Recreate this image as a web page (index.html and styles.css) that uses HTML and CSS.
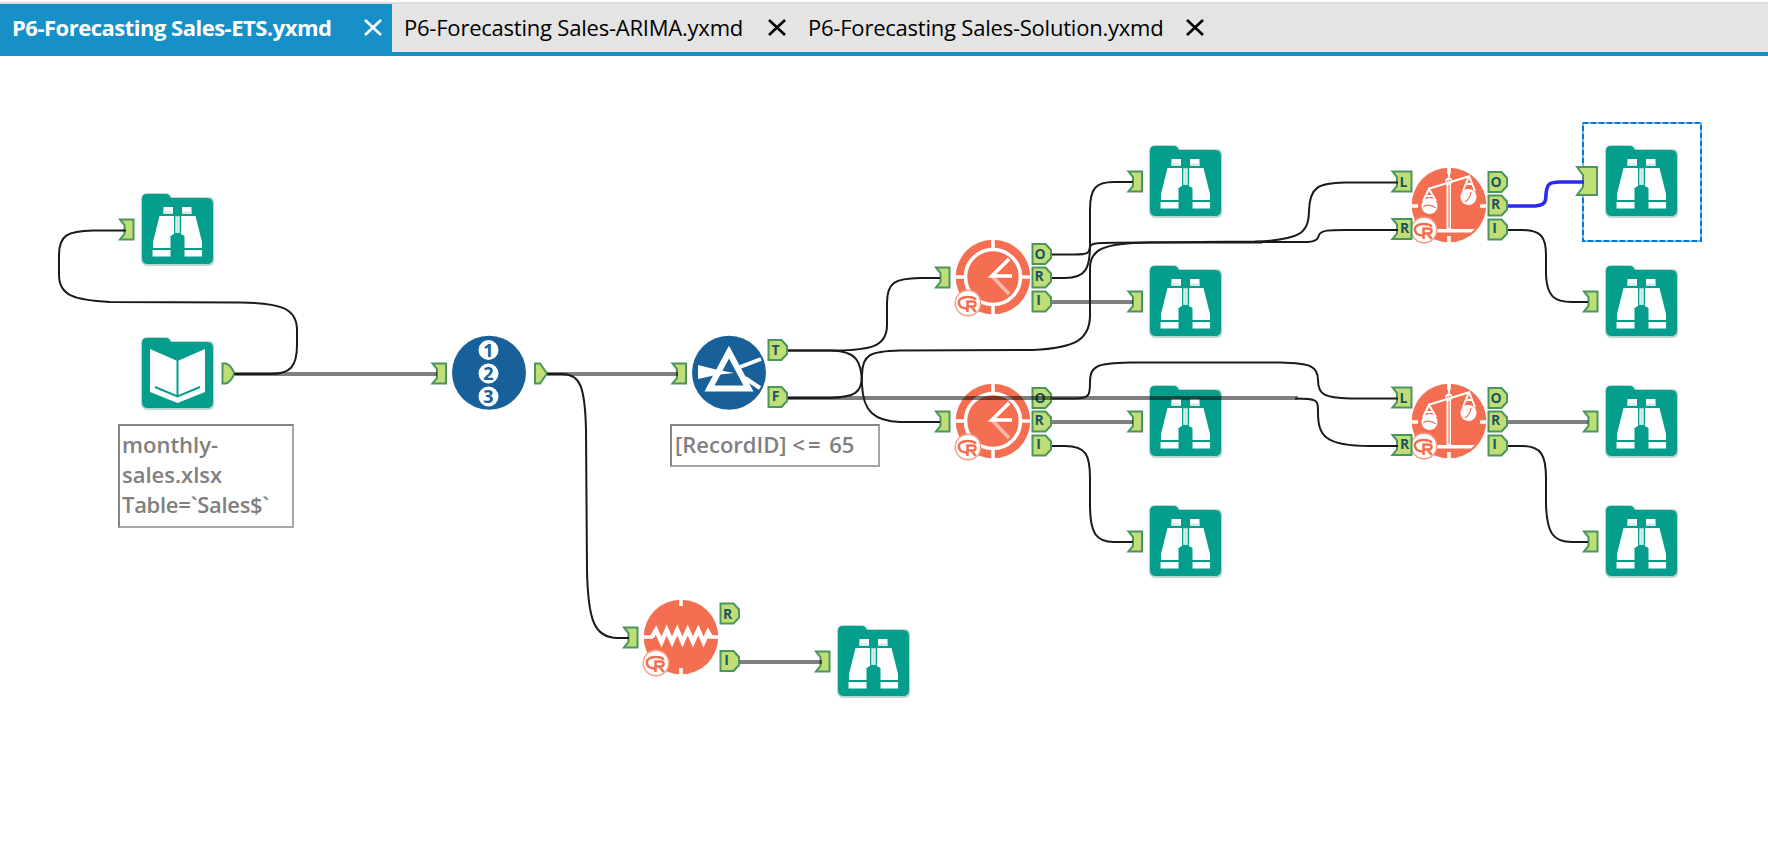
FILE: index.html
```html
<!DOCTYPE html>
<html lang="en">
<head>
<meta charset="utf-8">
<title>Workflow designer</title>
<link rel="stylesheet" href="styles.css">
</head>
<body>
<nav class="tabs">
  <div class="tab tab-active"><span class="tab-name name-ets">P6-Forecasting Sales-ETS.yxmd</span><svg class="close" viewBox="0 0 18 17"><path d="M1 1L17 16M17 1L1 16"/></svg></div>
  <div class="tab tab-arima"><span class="tab-name name-arima">P6-Forecasting Sales-ARIMA.yxmd</span><svg class="close" viewBox="0 0 18 17"><path d="M1 1L17 16M17 1L1 16"/></svg></div>
  <div class="tab tab-solution"><span class="tab-name name-solution">P6-Forecasting Sales-Solution.yxmd</span><svg class="close" viewBox="0 0 18 17"><path d="M1 1L17 16M17 1L1 16"/></svg></div>
</nav>
<main class="canvas">
<svg class="flow" width="1768" height="858" viewBox="0 0 1768 858">
  <defs>
    <symbol id="folder" viewBox="0 0 74 74" overflow="visible">
      <path class="folder-edge" d="M6 0H25Q29 0 30 4H67Q73 4 73 10V67Q73 73 67 73H7Q0 73 0 66V6Q0 0 6 0Z"/>
      <path class="teal" d="M6 1H25Q28 1 30 5H66Q72 5 72 11V65Q72 71 66 71H7Q1 71 1 65V6Q1 1 6 1Z"/>
    </symbol>
    <symbol id="browse" viewBox="0 0 74 74" overflow="visible">
      <use href="#folder" width="74" height="74"/>
      <path class="white" d="M22.500 14H32V21H22.500ZM41 14H50.500V21H41ZM18.500 23H33V41L29.500 43V55H12V49ZM40 23H54.500L61 49V55H43.500V43L40 41ZM34.500 23.500H38.500V40H34.500ZM11.500 57H29.500V63.500H11.500ZM43.500 57H61V63.500H43.500Z"/>
      <path class="pale" d="M22.500 18.500H32V21H22.500ZM41 18.500H50.500V21H41ZM34.500 23.500H38.500V40H34.500Z"/>
    </symbol>
    <symbol id="input" viewBox="0 0 74 74" overflow="visible">
      <use href="#folder" width="74" height="74"/>
      <path class="white" d="M9 12L36.500 24L64 12V55L36.500 66L9 55Z"/>
      <path class="teal-line" d="M36.500 22V60M14 50L36.500 59.500L59 50"/>
    </symbol>
    <symbol id="rlogo" viewBox="0 0 28 28" overflow="visible">
      <circle class="r-ring" cx="14" cy="14" r="12.800"/>
      <path class="r-line" d="M13 19.500C2 19.500 2 8 13 8Q21 8 21.500 11"/>
      <path class="r-line" d="M13.500 23V12.500H18.500Q21.500 12.500 21.500 15T18.500 17.500H14M17.500 17.500L21.500 23"/>
    </symbol>
    <symbol id="clock" viewBox="0 0 76 76" overflow="visible">
      <circle class="orange" cx="38" cy="38" r="37.300"/>
      <circle class="gap-line" cx="38" cy="38" r="27.500"/>
      <path class="gap-line" d="M38 0V11M38 65V76M0 38H11M65 38H76"/>
      <path class="hand faint" d="M37 37L54 55"/><path class="hand" d="M54 20L37 37H57"/>
      <use href="#rlogo" x="-1" y="50" width="28" height="28"/>
    </symbol>
    <symbol id="scales" viewBox="0 0 76 76" overflow="visible">
      <circle class="orange" cx="38" cy="38" r="37.300"/>
      <path class="gap-line" d="M38 0V7M38 69V76M0 39H7M69 39H76"/>
      <path class="white" d="M35.500 14H40V62H64L60 65.500H20V62H35.500Z"/>
      <circle class="white" cx="37.800" cy="14" r="3.500"/><path class="orange-thin" d="M35.500 15L40 13M38 18V61"/>
      <path class="white-thin" d="M17 22L59 9M38 3V12M18 22L12 34M18 22L25 34M15 29H22M58 9L52 24M58 9L64 24M55 17H61"/>
      <circle class="white" cx="18.500" cy="39" r="8"/><circle class="white" cx="57.500" cy="30" r="8"/>
      <path class="orange-thin" d="M12 40Q18 36 25 41M60 25Q59 32 54 35"/>
      <use href="#rlogo" x="-1" y="49" width="28" height="28"/>
    </symbol>
    <symbol id="tsplot" viewBox="0 0 76 76" overflow="visible">
      <circle class="orange" cx="38" cy="38" r="37.300"/>
      <path class="gap-line" d="M38 0V7M38 69V76M0 38H10M65 38H76"/>
      <path class="zigzag" d="M9 38L13 31L18.500 43L23.700 31L29 43L34.300 31L39.500 43L44.700 31L50 43L55.300 31L60.500 43L65 33L68 38"/>
      <use href="#rlogo" x="-1" y="50" width="28" height="28"/>
    </symbol>
    <path id="in" class="port" d="M1 1H14.500V21H1L5.500 15.500V6.500Z"/>
    <path id="in-wide" class="port" d="M1 1H20V21H1L5.500 15.500V6.500Z"/>
    <path id="out" class="port" d="M1 1H4Q9 2 13 11Q9 20 4 21H1Z"/>
    <path id="out-wide" class="port" d="M1 1H14L19.500 7V15L14 21H1Z"/>
  </defs>

  <!-- selection -->
  <rect class="select-base" x="1583" y="123" width="118" height="118"/>
  <rect class="select-dash" x="1583" y="123" width="118" height="118"/>

  <!-- browse tools -->
  <use href="#browse" x="141" y="193" width="74" height="74"/>
  <use href="#browse" x="1149" y="145" width="74" height="74"/>
  <use href="#browse" x="1149" y="265" width="74" height="74"/>
  <use href="#browse" x="1149" y="385" width="74" height="74"/>
  <use href="#browse" x="1149" y="505" width="74" height="74"/>
  <use href="#browse" x="1605" y="145" width="74" height="74"/>
  <use href="#browse" x="1605" y="265" width="74" height="74"/>
  <use href="#browse" x="1605" y="385" width="74" height="74"/>
  <use href="#browse" x="1605" y="505" width="74" height="74"/>
  <use href="#browse" x="837" y="625" width="74" height="74"/>
  <use href="#input" x="141" y="337" width="74" height="74"/>

  <!-- record id -->
  <circle class="navy" cx="489" cy="372.700" r="37"/>
  <circle class="white" cx="488.500" cy="350" r="10"/><circle class="white" cx="488.500" cy="373.500" r="10"/><circle class="white" cx="488.500" cy="396.500" r="10"/>
  <g class="digits"><text x="488.500" y="356.500">1</text><text x="488.500" y="380">2</text><text x="488.500" y="403">3</text></g>

  <!-- filter -->
  <circle class="navy" cx="729" cy="372.700" r="37"/>
  <path class="prism-fill" d="M729 352L709.500 388.500H748.500Z"/>
  <path class="white" d="M698 365L718 370L734 373L716 375L698 379Z"/>
  <path class="ray" d="M740 367L761 359"/><path class="ray" d="M745 378L760 388"/>

  <use href="#clock" x="955" y="239" width="76" height="76"/>
  <use href="#clock" x="955" y="383" width="76" height="76"/>
  <use href="#scales" x="1411" y="167" width="76" height="76"/>
  <use href="#scales" x="1411" y="383" width="76" height="76"/>
  <use href="#tsplot" x="643" y="599" width="76" height="76"/>

  <!-- input ports -->
  <use href="#in" x="119" y="218.500"/>
  <use href="#in" x="431.500" y="362.500"/>
  <use href="#in" x="671.500" y="362.500"/>
  <use href="#in" x="935" y="266.500"/>
  <use href="#in" x="935" y="410.500"/>
  <use href="#in" x="1127.500" y="170.500"/>
  <use href="#in" x="1127.500" y="290.500"/>
  <use href="#in" x="1127.500" y="410.500"/>
  <use href="#in" x="1127.500" y="530.500"/>
  <path class="port" d="M1577 167H1597V195H1577L1583 187V175Z"/>
  <use href="#in" x="1583" y="290.500"/>
  <use href="#in" x="1583" y="410.500"/>
  <use href="#in" x="1583" y="530.500"/>
  <use href="#in" x="623" y="626.500"/>
  <use href="#in" x="815" y="650.500"/>
  <use href="#in-wide" x="1391.500" y="170.500"/>
  <use href="#in-wide" x="1391.500" y="218"/>
  <use href="#in-wide" x="1391.500" y="386.500"/>
  <use href="#in-wide" x="1391.500" y="434"/>

  <!-- output ports -->
  <use href="#out" x="221.500" y="362.500"/>
  <use href="#out-wide" x="767.500" y="339"/>
  <use href="#out-wide" x="767.500" y="386"/>
  <path class="port" d="M535 363.500H540L547 373.500L540 383.500H535Z"/>
  <use href="#out-wide" x="1031.500" y="243"/>
  <use href="#out-wide" x="1031.500" y="266.500"/>
  <use href="#out-wide" x="1031.500" y="290.500"/>
  <use href="#out-wide" x="1031.500" y="387"/>
  <use href="#out-wide" x="1031.500" y="410.500"/>
  <use href="#out-wide" x="1031.500" y="434.500"/>
  <use href="#out-wide" x="1487.500" y="171"/>
  <use href="#out-wide" x="1487.500" y="194.500"/>
  <use href="#out-wide" x="1487.500" y="218.500"/>
  <use href="#out-wide" x="1487.500" y="387"/>
  <use href="#out-wide" x="1487.500" y="410.500"/>
  <use href="#out-wide" x="1487.500" y="434.500"/>
  <use href="#out-wide" x="719.500" y="602.500"/>
  <use href="#out-wide" x="719.500" y="650"/>
  <g class="letters">
    <text x="775.500" y="354.500">T</text><text x="775.500" y="401">F</text>
    <text x="1040" y="259">O</text><text x="1039" y="281">R</text><text x="1038.500" y="305">I</text>
    <text x="1040" y="403">O</text><text x="1039" y="425">R</text><text x="1038.500" y="449">I</text>
    <text x="1496" y="187">O</text><text x="1495.500" y="209">R</text><text x="1494.500" y="233">I</text>
    <text x="1496" y="403">O</text><text x="1495.500" y="425">R</text><text x="1494.500" y="449">I</text>
    <text x="1403.500" y="187">L</text><text x="1404.500" y="233">R</text>
    <text x="1403.500" y="403">L</text><text x="1404.500" y="449">R</text>
    <text x="727.500" y="618.500">R</text><text x="726.500" y="665">I</text>
  </g>

  <!-- straight wires -->
  <path class="run" d="M235 374H437M547 374H678M788 398H1298M1052 302H1133M1052 422H1133M1508 422H1588M740 662H822"/>
  <!-- curved wires -->
  <g class="wire">
    <path d="M234 374H270C290 374 297 367 297 345V330C297 308 280 303 240 302.500L110 302C75 300 59 296 59 275V255C59 235 68 231 93 230.500H126"/>
    <path d="M547 374H562C580 374 585 386 586 430L587 570C588 620 594 638 618 638H629"/>
    <path d="M788 350.500H835C870 350 887 347 887 325V303C887 282 895 278.500 920 278H940"/>
    <path d="M788 350.500H830C856 351 862 360 862 385C863 412 875 421 900 422H940"/>
    <path d="M788 398H830C855 397 862 393 862 375C862 355 870 351 900 350.500L1033 350C1075 348 1090 340 1090 315V268C1090 250 1102 243 1150 242.500H1262"/>
    <path d="M1052 254.500H1075C1090 254.500 1089 252 1090 247C1091 243 1096 243 1115 242.800L1255 241.500C1299 240 1309 234 1309 210C1310 187 1318 183 1345 182.500H1398"/>
    <path d="M1250 242H1308C1318 241 1318 238 1319 235C1321 230 1330 230 1345 230H1398"/>
    <path d="M1052 278H1065C1086 278 1090 268 1090 245V210C1090 188 1096 182 1114 182H1133"/>
    <path d="M1052 398.500H1075C1090 398.500 1090 394 1090 383C1090 366 1096 363 1130 362.500H1280C1312 363 1318 367 1318 380C1318 395 1325 398 1350 398.500H1398"/>
    <path d="M1295 398.500C1318 398.500 1318 400 1318 412C1318 436 1325 446 1370 446H1398"/>
    <path d="M1052 446H1065C1086 446 1090 455 1090 478V505C1090 533 1096 542 1114 542H1133"/>
    <path d="M1508 230H1522C1541 230 1546 237 1546 255V275C1547 296 1554 302 1572 302H1588"/>
    <path d="M1508 446H1522C1541 446 1546 455 1546 478V505C1547 533 1553 542 1572 542H1588"/>
  </g>
  <path class="wire-active" d="M1508 206H1535C1545 205 1546 202 1546 194C1547 184 1549 182 1560 182H1584"/>
</svg>
<p class="note note-input">monthly-<br>sales.xlsx<br><span class="table-name">Table=`Sales$`</span></p>
<p class="note note-filter">[RecordID] <span class="operator">&lt;=</span> 65</p>
</main>
</body>
</html>
```

FILE: styles.css
```css
body { margin: 0; background: #fff; font-family: "Open Sans", "Noto Sans", sans-serif; overflow: hidden; }

.tabs {
  box-sizing: border-box;
  display: flex;
  height: 56px;
  margin-bottom: -56px;
  border-top: 2px solid #fff;
  border-bottom: 4px solid #1790c7;
  background: linear-gradient(#dcdcdc 2px, #e4e4e4 2px);
}
.tab { box-sizing: border-box; display: flex; align-items: flex-start; height: 50px; padding-top: 2px; color: #000; }
.tab-active { width: 392px; padding-left: 12px; background: linear-gradient(#dcdcdc 2px, #1790c7 2px); color: #fff; }
.tab-arima { width: 404px; padding-left: 12px; }
.tab-solution { padding-left: 12px; }
.tab-name { font-size: 22px; line-height: 30px; margin-top: 8px; white-space: nowrap; letter-spacing: -0.22px; }
.name-ets { width: 352px; font-weight: 700; letter-spacing: -0.5px; }
.name-arima { width: 364px; }
.name-solution { width: 378px; }
.close { width: 18px; height: 17px; margin-top: 15px; flex: none; fill: none; stroke: currentColor; stroke-width: 2.6; }

.canvas { position: relative; width: 1768px; height: 858px; }
.flow { display: block; }

.note {
  position: absolute;
  box-sizing: border-box;
  margin: 0;
  border: 2px solid #858585;
  border-right-color: #a5a5a5;
  border-bottom-color: #a5a5a5;
  background: #fff;
  color: #808080;
  font-size: 22px;
  font-weight: 600;
  line-height: 30px;
  white-space: nowrap;
}
.note-input { left: 118px; top: 424px; width: 176px; height: 104px; padding: 3px 2px; }
.note-filter { left: 670px; top: 424px; width: 210px; height: 43px; padding: 3px 3px; }
.table-name { letter-spacing: -0.3px; }
.operator { letter-spacing: 3px; }

.folder-edge { fill: #b5d8d0; }
.teal { fill: #059d8c; }
.teal-line { fill: none; stroke: #059d8c; stroke-width: 2; }
.white { fill: #fff; }
.pale { fill: #cfeae6; }
.orange { fill: #f46f51; }
.navy { fill: #18609a; }
.gap-line { fill: none; stroke: #fff; stroke-width: 3.6; }
.zigzag { fill: none; stroke: #fff; stroke-width: 4.4; }
.hand { fill: none; stroke: #fff; stroke-width: 3.6; }
.faint { stroke: #fbb9a8; }
.white-thin { fill: none; stroke: #fff; stroke-width: 2; }
.orange-thin { fill: none; stroke: #f46f51; stroke-width: 1.2; }
.r-ring { fill: #fff; stroke: #f79b86; stroke-width: 1.4; }
.r-line { fill: none; stroke: #f46f51; stroke-width: 2.6; }
.prism-fill { fill: #18609a; stroke: #fff; stroke-width: 6; }
.ray { fill: none; stroke: #fff; stroke-width: 4; }
.digits { fill: #18609a; font: 700 18px "Open Sans", sans-serif; text-anchor: middle; }
.letters { fill: #1c5560; font: 700 14px "Open Sans", sans-serif; text-anchor: middle; }
.port { fill: #c1de74; stroke: #4a9560; stroke-width: 2; }
.run { fill: none; stroke: #000; stroke-opacity: 0.5; stroke-width: 4; }
.wire { fill: none; stroke: #1a1a1a; stroke-width: 2; }
.wire-active { fill: none; stroke: #2a2af2; stroke-width: 3.6; }
.select-base { fill: none; stroke: #7ab8ec; stroke-width: 2; }
.select-dash { fill: none; stroke: #0078d7; stroke-width: 2; stroke-dasharray: 5 3; }
```
